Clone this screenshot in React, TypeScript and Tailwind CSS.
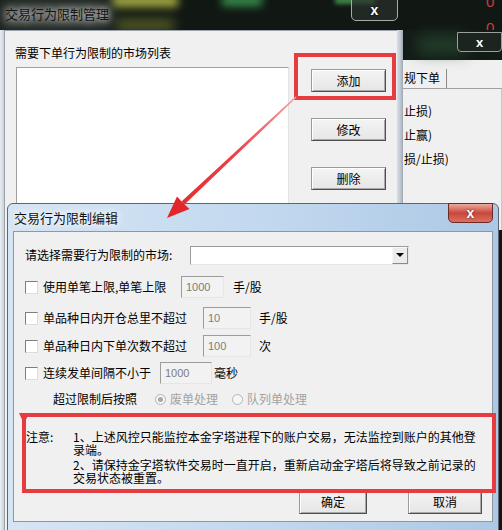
import React from "react";

function RaisedBtn({ children, className = "" }: { children: React.ReactNode; className?: string }) {
  return (
    <div
      className={`flex items-center justify-center border border-[#9a9a9a] border-b-[#4f4f4f] border-r-[#4f4f4f] bg-gradient-to-b from-[#f4f4f4] to-[#e6e6e6] shadow-[inset_1px_1px_0_#ffffff,inset_-1px_-1px_0_#a8a8a8] text-[12px] leading-none ${className}`}
    >
      {children}
    </div>
  );
}

function SunkenInput({ value, className = "" }: { value: string; className?: string }) {
  return (
    <div
      className={`h-[22px] flex items-center pl-[4px] border border-[#9c9c9c] border-b-[#e6e6e6] border-r-[#e6e6e6] bg-[#f2f2f2] text-[11px] text-[#7c7c7c] font-['Liberation_Sans',sans-serif] ${className}`}
    >
      {value}
    </div>
  );
}

function Check() {
  return (
    <div className="w-[13px] h-[13px] mr-[5px] shrink-0 border border-[#7e7e7e] border-b-[#dcdcdc] border-r-[#dcdcdc] bg-white" />
  );
}

function Radio({ checked }: { checked?: boolean }) {
  return (
    <div className="w-[11px] h-[11px] shrink-0 rounded-full border border-[#b4b4b4] bg-[#f5f5f5] flex items-center justify-center">
      {checked && <div className="w-[5px] h-[5px] rounded-full bg-[#a8a8a8]" />}
    </div>
  );
}

export default function App() {
  return (
    <div className="relative w-[502px] h-[530px] overflow-hidden bg-[#111713] font-['Noto_Sans_CJK_SC',sans-serif] text-[12px] text-black">
      {/* blurred background trading app */}
      <div className="absolute left-[112px] top-[-5px] w-[66px] h-[12px] bg-[#c7cd4e] blur-[4px] opacity-80" />
      <div className="absolute left-[116px] top-[19px] w-[58px] h-[12px] bg-[#7f8a33] blur-[6px] opacity-60" />
      <div className="absolute left-[222px] top-[-5px] w-[40px] h-[11px] bg-[#3fae5a] blur-[4px] opacity-80" />
      <div className="absolute left-[335px] top-[-3px] w-[40px] h-[7px] bg-[#5fcf6a] blur-[2px] opacity-60" />
      <div className="absolute left-[0px] top-[2px] w-[110px] h-[26px] bg-[#59605b] blur-[8px] opacity-70" />
      <div className="absolute left-[486px] top-[-6px] text-[15px] leading-none text-[#d43a3a] font-['Liberation_Sans',sans-serif]">0</div>
      <div className="absolute left-[486px] top-[20px] text-[15px] leading-none text-[#d43a3a] font-['Liberation_Sans',sans-serif]">0</div>

      {/* background window on the right */}
      <div className="absolute left-[397px] top-[30px] w-[105px] h-[200px] flex flex-col">
        <div className="relative h-[30px] bg-[#121a15]">
          <div className="absolute left-[20px] top-[6px] w-[50px] h-[18px] bg-[#2e5a3c] blur-[8px] opacity-60" />
          <div className="absolute right-[0px] top-[2px] w-[45px] h-[20px] rounded-b-[4px] border border-[#9aa09c] bg-[#1c2420] flex items-center justify-center text-white text-[13px] font-bold leading-none font-['Liberation_Sans',sans-serif]">
            x
          </div>
        </div>
        <div className="flex-1 bg-[#f0f0f0] pl-[7px] flex flex-col">
          <div className="mt-[9px] h-[19px] flex items-end">
            <div className="h-[19px] w-[43px] border-r border-[#8b8b8b] leading-[18px] text-[12px]">规下单</div>
          </div>
          <div className="-ml-[30px] w-[129px] flex-1 border-t border-r-2 border-[#a0a0a0] border-r-[#c8c8c8] bg-[#f0f0f0] pl-[30px] pt-[14px] flex flex-col">
            <div className="h-[24px] leading-[16px]">止损)</div>
            <div className="h-[24px] leading-[16px]">止赢)</div>
            <div className="h-[24px] leading-[16px]">损/止损)</div>
          </div>
        </div>
      </div>

      {/* window 1: 交易行为限制管理 */}
      <div className="absolute left-0 top-0 w-[403px] h-[530px] flex flex-col">
        <div className="relative h-[30px]">
          <div className="absolute left-[5px] top-[6px] text-[13px] leading-[16px] text-[#141414] [text-shadow:0_0_6px_#d8d8d8,0_0_10px_#bcbcbc]">
            交易行为限制管理
          </div>
          <div className="absolute left-[351px] top-[-1px] w-[47px] h-[22px] rounded-b-[5px] border border-[#a7aca9] bg-[#2a302c]/70 flex items-center justify-center text-white text-[14px] font-bold leading-none font-['Liberation_Sans',sans-serif] [text-shadow:0_0_2px_#000]">
            x
          </div>
        </div>
        <div className="flex flex-1">
          <div className="w-[4px] bg-gradient-to-r from-[#e9eef2] to-[#c9d1d9]" />
          <div className="flex-1 bg-[#f0f0f0] border-l border-t border-[#9aa3ab] flex pl-[10px]">
            <div className="w-[274px] flex flex-col">
              <div className="pt-[14px] leading-[16px] text-[12px]">需要下单行为限制的市场列表</div>
              <div className="mt-[6px] ml-[1px] h-[300px] bg-white border border-[#a0a0a0] border-b-[#e3e3e3] border-r-[#e3e3e3]" />
            </div>
            <div className="ml-[22px] pt-[38px] flex flex-col gap-[26px]">
              <RaisedBtn className="w-[75px] h-[23px]">添加</RaisedBtn>
              <RaisedBtn className="w-[75px] h-[23px]">修改</RaisedBtn>
              <RaisedBtn className="w-[75px] h-[23px]">删除</RaisedBtn>
            </div>
          </div>
          <div className="w-[6px] bg-gradient-to-r from-[#d9dee3] via-[#c2cbd4] to-[#9ea8b2]" />
        </div>
      </div>

      {/* dialog 2: 交易行为限制编辑 */}
      <div className="absolute left-[7px] top-[203px] w-[492px] h-[340px] rounded-t-[6px] border border-[#5d6670] bg-gradient-to-r from-[#d6e5f4] via-[#c3d9ef] to-[#adc8e5] flex flex-col">
        <div className="relative h-[27px] shrink-0">
          <div className="absolute left-[6px] top-[6px] text-[13px] leading-[16px] text-[#111] [text-shadow:0_0_6px_#ffffff,0_0_10px_#ffffff]">
            交易行为限制编辑
          </div>
          <div className="absolute right-[5px] top-[-1px] w-[45px] h-[20px] rounded-b-[5px] border border-[#6b2a26] bg-gradient-to-b from-[#e9a9a0] via-[#c8463a] to-[#d9705f] flex items-center justify-center text-white text-[14px] font-bold leading-none font-['Liberation_Sans',sans-serif] [text-shadow:0_0_2px_#5a1010]">
            x
          </div>
        </div>
        <div className="mx-[5px] h-[291px] shrink-0 bg-[#f0f0f0] border border-[#8d97a1] flex flex-col">
          {/* row 1 */}
          <div className="mt-[13px] h-[20px] flex items-center pl-[11px]">
            <span className="w-[165px] leading-[16px]">请选择需要行为限制的市场:</span>
            <div className="w-[219px] h-[19px] bg-white border border-[#9c9c9c] border-b-[#e6e6e6] border-r-[#e6e6e6] flex justify-end">
              <div className="w-[16px] h-[17px] bg-[#ececec] border border-[#f8f8f8] border-b-[#8a8a8a] border-r-[#8a8a8a] flex items-center justify-center">
                <div className="w-0 h-0 border-l-[4px] border-r-[4px] border-t-[4px] border-l-transparent border-r-transparent border-t-black" />
              </div>
            </div>
          </div>
          {/* row 2 */}
          <div className="mt-[11px] h-[22px] flex items-center pl-[11px]">
            <Check />
            <span className="w-[138px] leading-[16px]">使用单笔上限,单笔上限</span>
            <SunkenInput value="1000" className="w-[43px]" />
            <span className="ml-[9px] leading-[16px]">手/股</span>
          </div>
          {/* row 3 */}
          <div className="mt-[9px] h-[22px] flex items-center pl-[11px]">
            <Check />
            <span className="w-[160px] leading-[16px]">单品种日内开仓总里不超过</span>
            <SunkenInput value="10" className="w-[48px]" />
            <span className="ml-[8px] leading-[16px]">手/股</span>
          </div>
          {/* row 4 */}
          <div className="mt-[6px] h-[22px] flex items-center pl-[11px]">
            <Check />
            <span className="w-[160px] leading-[16px]">单品种日内下单次数不超过</span>
            <SunkenInput value="100" className="w-[48px]" />
            <span className="ml-[8px] leading-[16px]">次</span>
          </div>
          {/* row 5 */}
          <div className="mt-[5px] h-[22px] flex items-center pl-[11px]">
            <Check />
            <span className="w-[117px] leading-[16px]">连续发单间隔不小于</span>
            <SunkenInput value="1000" className="w-[52px]" />
            <span className="ml-[2px] leading-[16px]">毫秒</span>
          </div>
          {/* row 6 */}
          <div className="mt-[7px] h-[16px] flex items-center pl-[39px]">
            <span className="w-[102px] leading-[16px]">超过限制后按照</span>
            <Radio checked />
            <span className="ml-[4px] leading-[16px] text-[#a2a2a2]">废单处理</span>
            <div className="ml-[14px]">
              <Radio />
            </div>
            <span className="ml-[4px] leading-[16px] text-[#a2a2a2]">队列单处理</span>
          </div>
          {/* note */}
          <div className="mt-[23px] flex pl-[12px] text-[12px] leading-[13px]">
            <span className="w-[47px]">注意:</span>
            <div className="flex flex-col">
              <span>1、上述风控只能监控本金字塔进程下的账户交易，无法监控到账户的其他登</span>
              <span>录端。</span>
              <span className="mt-[2px]">2、请保持金字塔软件交易时一直开启，重新启动金字塔后将导致之前记录的</span>
              <span>交易状态被重置。</span>
            </div>
          </div>
          {/* buttons */}
          <div className="mt-[5px] flex justify-end gap-[41px] pr-[10px]">
            <RaisedBtn className="w-[68px] h-[25px]">确定</RaisedBtn>
            <RaisedBtn className="w-[74px] h-[25px]">取消</RaisedBtn>
          </div>
        </div>
      </div>

      {/* annotations */}
      <div className="absolute left-[294px] top-[53px] w-[102px] h-[47px] border-[4px] border-[#e63b3f]" />
      <div className="absolute left-[22px] top-[413px] w-[474px] h-[80px] border-[4px] border-[#e63b3f]" />
      <svg className="absolute left-0 top-0 pointer-events-none" width="502" height="530">
        <defs>
          <linearGradient id="ar" x1="296" y1="97" x2="167" y2="218" gradientUnits="userSpaceOnUse">
            <stop offset="0" stopColor="#f4a2a2" />
            <stop offset="0.45" stopColor="#e8454a" />
            <stop offset="1" stopColor="#e3262c" />
          </linearGradient>
        </defs>
        <polygon points="296.5,97.6 295.5,96.4 181.5,201.4 184.5,204.6" fill="url(#ar)" />
        <polygon points="167,218 177,196.5 183,203 189.5,209" fill="#e3262c" />
        <polygon points="19,413 29,413 24,424" fill="#e63b3f" />
      </svg>
    </div>
  );
}
